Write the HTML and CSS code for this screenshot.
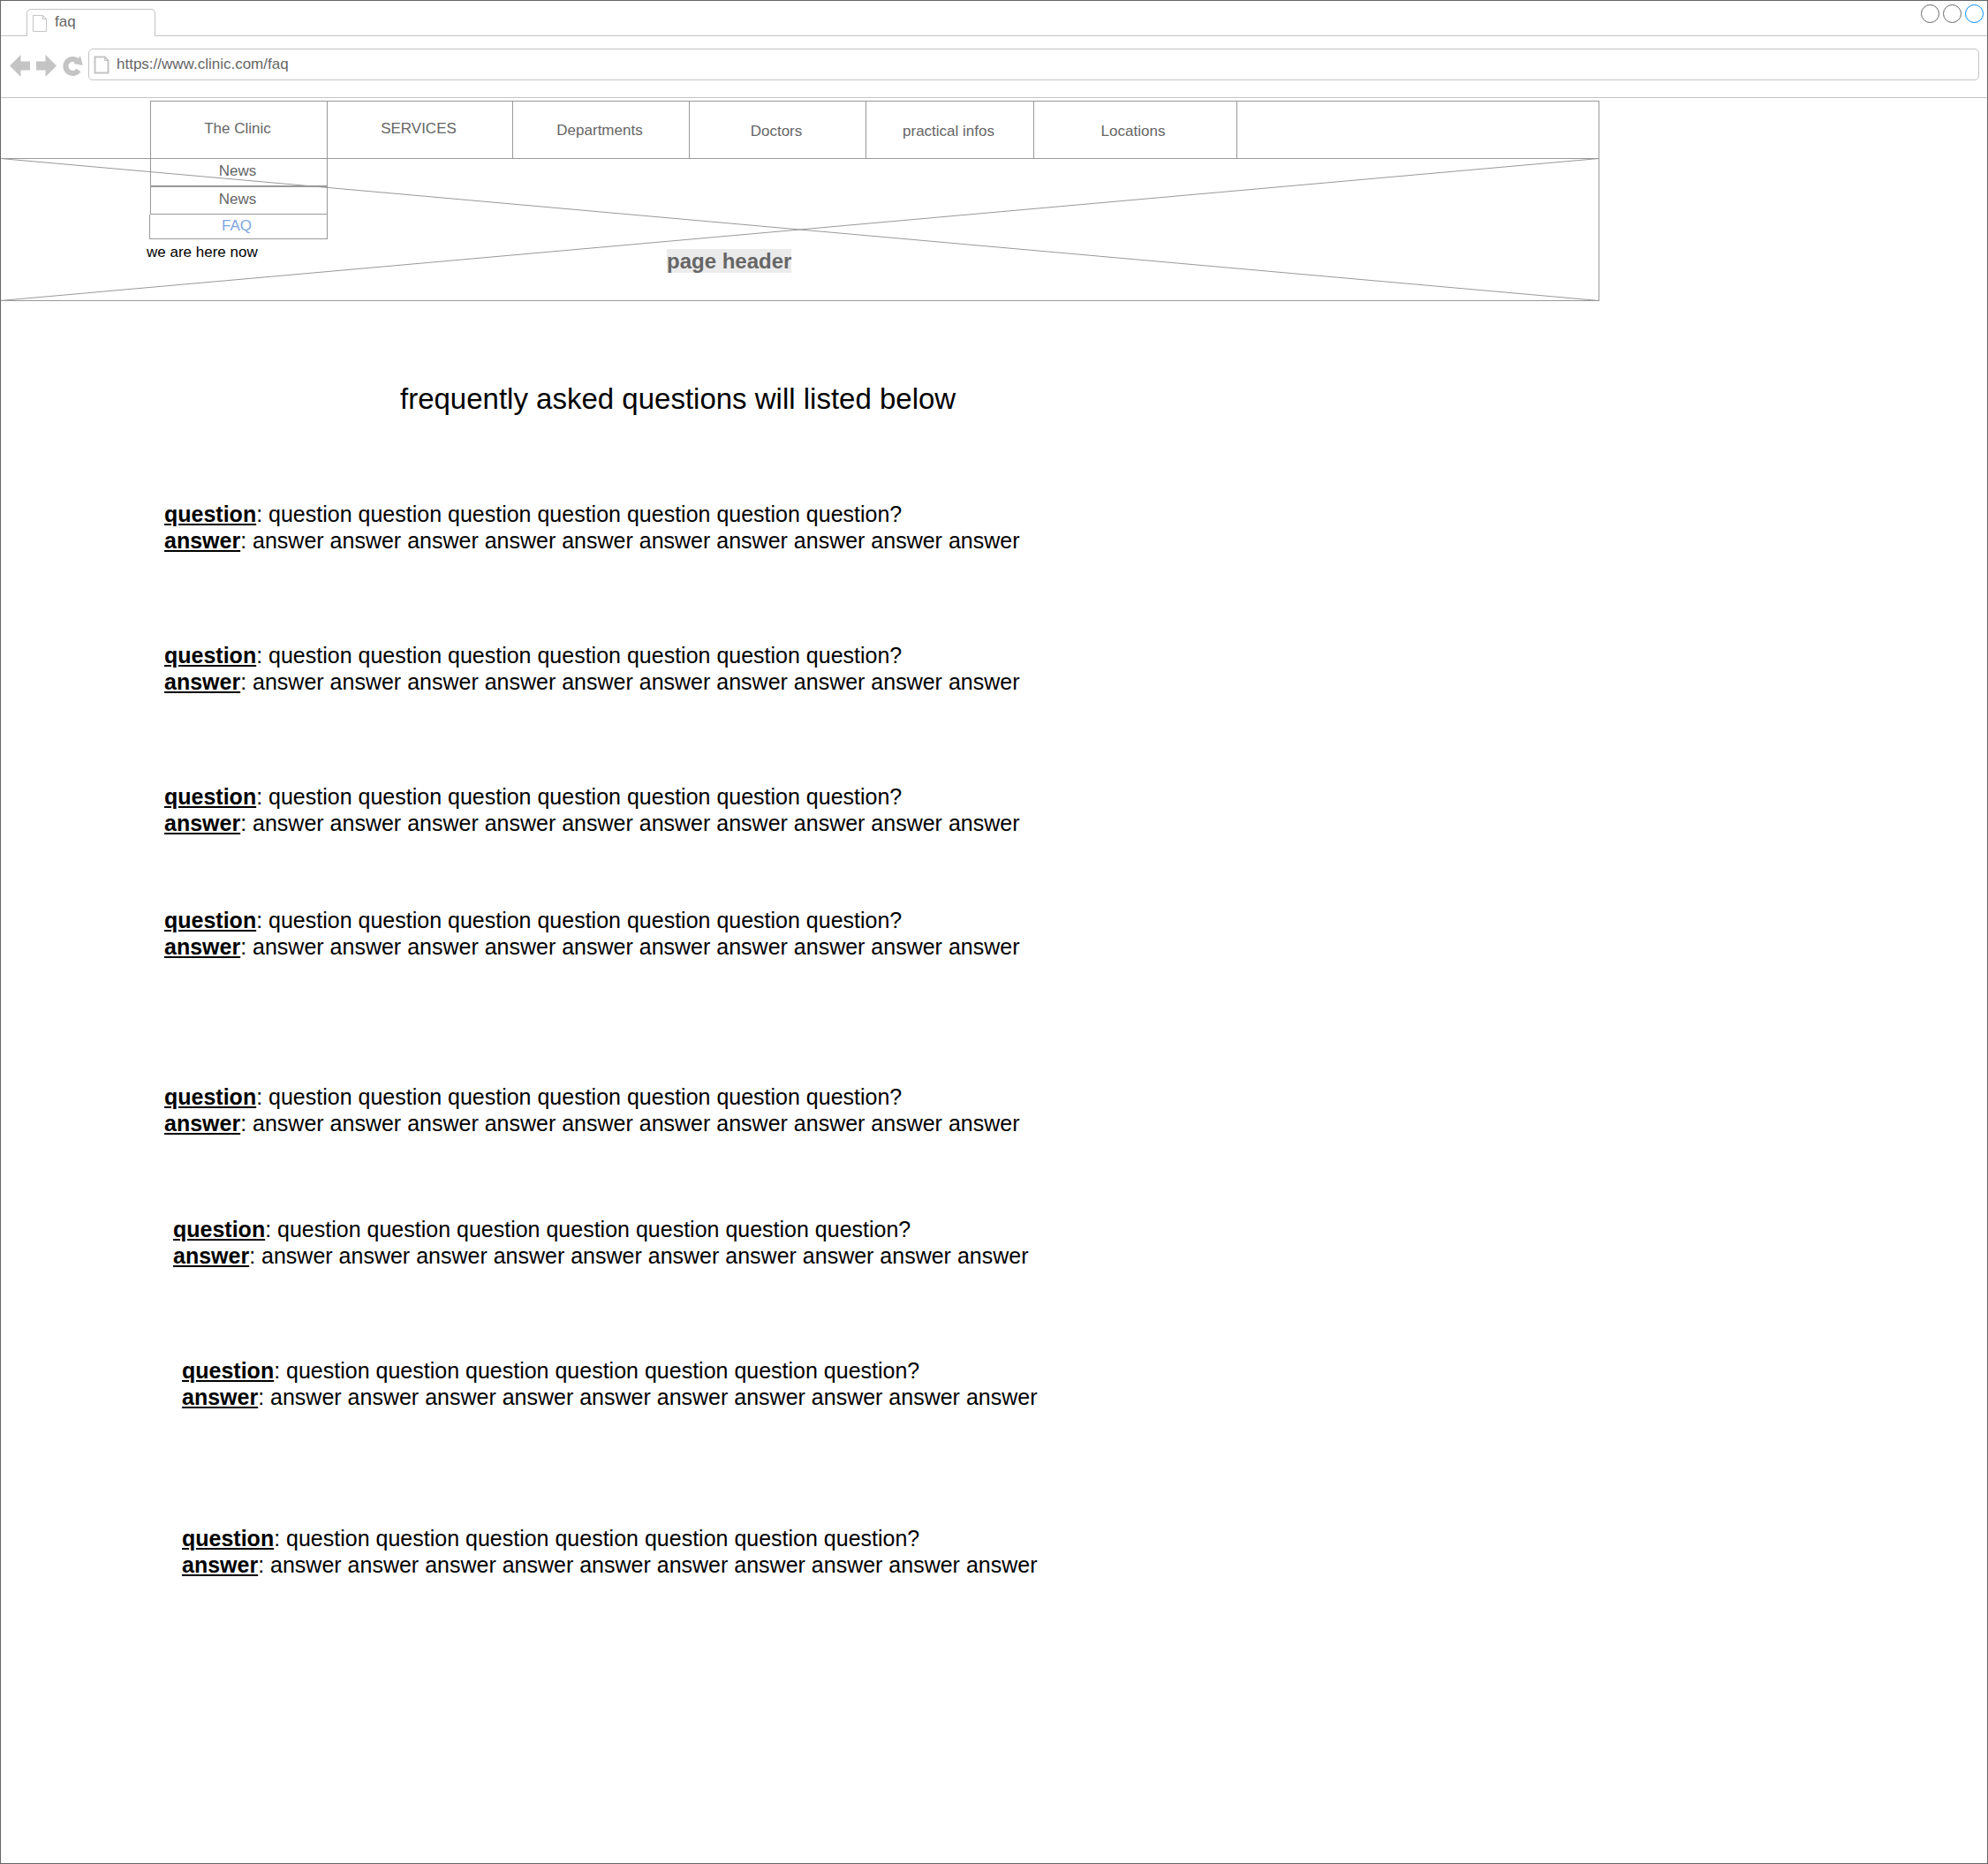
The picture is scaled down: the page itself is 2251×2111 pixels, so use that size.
FILE: index.html
```html
<!DOCTYPE html>
<html lang="en">
<head>
<meta charset="utf-8">
<title>faq</title>
<link rel="stylesheet" href="styles.css">
</head>
<body>
<div class="window">
  <header class="tabbar">
    <div class="tab">
      <svg class="tab-icon" width="16" height="20" viewBox="0 0 16 20"><path d="M.5 1.500H11.500L15.500 5.500V19.500H.5ZM11.500 1.500V5.500H15.500"/></svg>
      <span>faq</span>
    </div>
    <div class="controls"><i class="dot"></i><i class="dot"></i><i class="dot dot-active"></i></div>
  </header>
  <div class="toolbar">
    <svg class="tools" width="84" height="26" viewBox="0 0 84 26">
      <path d="M0 12.500L12.500 0V7.500H23V17.500H12.500V25Z"/>
      <path d="M53 12.500L40.500 0V7.500H30V17.500H40.500V25Z"/>
      <path class="reload" d="M78 17.500A8 8 0 1 1 76 6.400"/>
      <path d="M80 1.300L82.700 12L72.300 10Z"/>
    </svg>
    <div class="address">
      <svg class="page-icon" width="18" height="21" viewBox="0 0 18 21"><path d="M1.500 1.500H12.500L16.500 5.500V19.500H1.500Z"/><path class="fold" d="M12.500 1.500V5.500H16.500"/></svg>
      <span>https://www.clinic.com/faq</span>
    </div>
  </div>
  <nav class="nav">
    <a class="nav-item w-clinic">The Clinic</a>
    <a class="nav-item w-services">SERVICES</a>
    <a class="nav-item w-departments">Departments</a>
    <a class="nav-item w-doctors">Doctors</a>
    <a class="nav-item w-infos">practical infos</a>
    <a class="nav-item w-locations">Locations</a>
  </nav>
  <section class="banner">
    <svg class="cross" width="1811" height="162" viewBox="0 0 1811 162"><path d="M.5.5L1810.500 161.500M.5 161.500L1810.500.5"/></svg>
    <div class="menu">
      <a class="menu-item">News</a>
      <a class="menu-item menu-second">News</a>
      <a class="menu-item menu-current">FAQ</a>
      <span class="here">we are here now</span>
    </div>
    <h1 class="banner-title">page header</h1>
  </section>
  <main class="content">
    <h2 class="title">frequently asked questions will listed below</h2>
    <div class="faq"><p><b>question</b>: question question question question question question question?</p><p><b>answer</b>: answer answer answer answer answer answer answer answer answer answer</p></div>
    <div class="faq gap-100"><p><b>question</b>: question question question question question question question?</p><p><b>answer</b>: answer answer answer answer answer answer answer answer answer answer</p></div>
    <div class="faq gap-100"><p><b>question</b>: question question question question question question question?</p><p><b>answer</b>: answer answer answer answer answer answer answer answer answer answer</p></div>
    <div class="faq gap-80"><p><b>question</b>: question question question question question question question?</p><p><b>answer</b>: answer answer answer answer answer answer answer answer answer answer</p></div>
    <div class="faq gap-140"><p><b>question</b>: question question question question question question question?</p><p><b>answer</b>: answer answer answer answer answer answer answer answer answer answer</p></div>
    <div class="faq gap-90 indent-1"><p><b>question</b>: question question question question question question question?</p><p><b>answer</b>: answer answer answer answer answer answer answer answer answer answer</p></div>
    <div class="faq gap-100 indent-2"><p><b>question</b>: question question question question question question question?</p><p><b>answer</b>: answer answer answer answer answer answer answer answer answer answer</p></div>
    <div class="faq gap-130 indent-2"><p><b>question</b>: question question question question question question question?</p><p><b>answer</b>: answer answer answer answer answer answer answer answer answer answer</p></div>
  </main>
</div>
</body>
</html>
```
FILE: styles.css
```css
* { box-sizing: border-box; }
body {
  margin: 0;
  background: #fff;
  color: #666;
  font: 17px/20px "Liberation Sans", Arial, sans-serif;
}
h1, h2, p { margin: 0; }
svg { display: block; flex: none; }

.window { height: 2111px; border: 1px solid #666; overflow: hidden; }

/* browser chrome */
.tabbar {
  display: flex;
  justify-content: space-between;
  align-items: flex-start;
  height: 40px;
  padding-left: 29px;
  border-bottom: 1px solid #c4c4c4;
}
.tab {
  display: flex;
  gap: 9px;
  width: 146px;
  height: 31px;
  margin-top: 9px;
  padding: 4px 0 0 6px;
  border: 1px solid #c4c4c4;
  border-bottom: 0;
  border-radius: 5px 5px 0 0;
  background: #fff;
}
.tab-icon { margin-top: 1px; fill: none; stroke: #c4c4c4; }
.controls { display: flex; gap: 4px; padding: 4px 4px 0 0; }
.dot { width: 21px; height: 21px; border: 1px solid #666; border-radius: 50%; }
.dot-active { border-color: #008cff; }
.toolbar {
  display: flex;
  height: 70px;
  padding: 14px 9px 0 10px;
  border-bottom: 1px solid #c4c4c4;
}
.tools { margin: 7px 5px 0 0; fill: #c4c4c4; }
.reload { fill: none; stroke: #c4c4c4; stroke-width: 6; }
.address {
  display: flex;
  flex: 1;
  gap: 8px;
  height: 36px;
  padding: 7px 5px;
  border: 1px solid #c4c4c4;
  border-radius: 5px;
}
.page-icon { fill: none; stroke: #c4c4c4; stroke-width: 2; }
.fold { stroke-width: 1; }

/* site navigation */
.nav {
  display: flex;
  width: 1641px;
  height: 65px;
  margin: 3px 0 0 169px;
  border: 1px solid #999;
  border-bottom: 0;
}
.nav-item { padding-right: 3px; border-right: 1px solid #999; text-align: center; }
.w-clinic { width: 200px; padding-top: 21px; }
.w-services { width: 210px; padding-top: 21px; }
.w-departments { width: 200px; padding-top: 23px; }
.w-doctors { width: 200px; padding-top: 24px; }
.w-infos { width: 190px; padding-top: 24px; }
.w-locations { width: 230px; padding-top: 24px; padding-right: 5px; }

/* banner placeholder with the open submenu */
.banner {
  position: relative;
  display: flex;
  width: 1811px;
  height: 162px;
  margin-left: -1px;
  border: 1px solid #999;
}
.cross { position: absolute; left: -1px; top: -1px; fill: none; stroke: #999; }
.menu { display: flex; flex-direction: column; align-items: flex-end; width: 370px; }
.menu-item {
  width: 201px;
  height: 31px;
  padding: 4px 3px 0 0;
  border: 1px solid #999;
  border-top: 0;
  text-align: center;
}
.menu-second { height: 32px; border-top: 1px solid #999; }
.menu-current { width: 202px; height: 28px; padding: 3px 4px 0 0; color: #7ea6e0; }
.here { width: 205px; margin-top: 5px; color: #000; }
.banner-title {
  align-self: flex-start;
  margin: 102px 0 0 384px;
  background: #ebebeb;
  font-size: 24px;
  line-height: 27px;
}

/* questions */
.content { color: #000; font-size: 25px; line-height: 30px; padding: 92px 0 0 185px; }
.title { margin: 0 0 96px 267px; font-size: 33px; font-weight: 400; line-height: 38px; }
.faq b { text-decoration: underline; }
.gap-80 { margin-top: 80px; }
.gap-90 { margin-top: 90px; }
.gap-100 { margin-top: 100px; }
.gap-130 { margin-top: 130px; }
.gap-140 { margin-top: 140px; }
.indent-1 { margin-left: 10px; }
.indent-2 { margin-left: 20px; }
```
